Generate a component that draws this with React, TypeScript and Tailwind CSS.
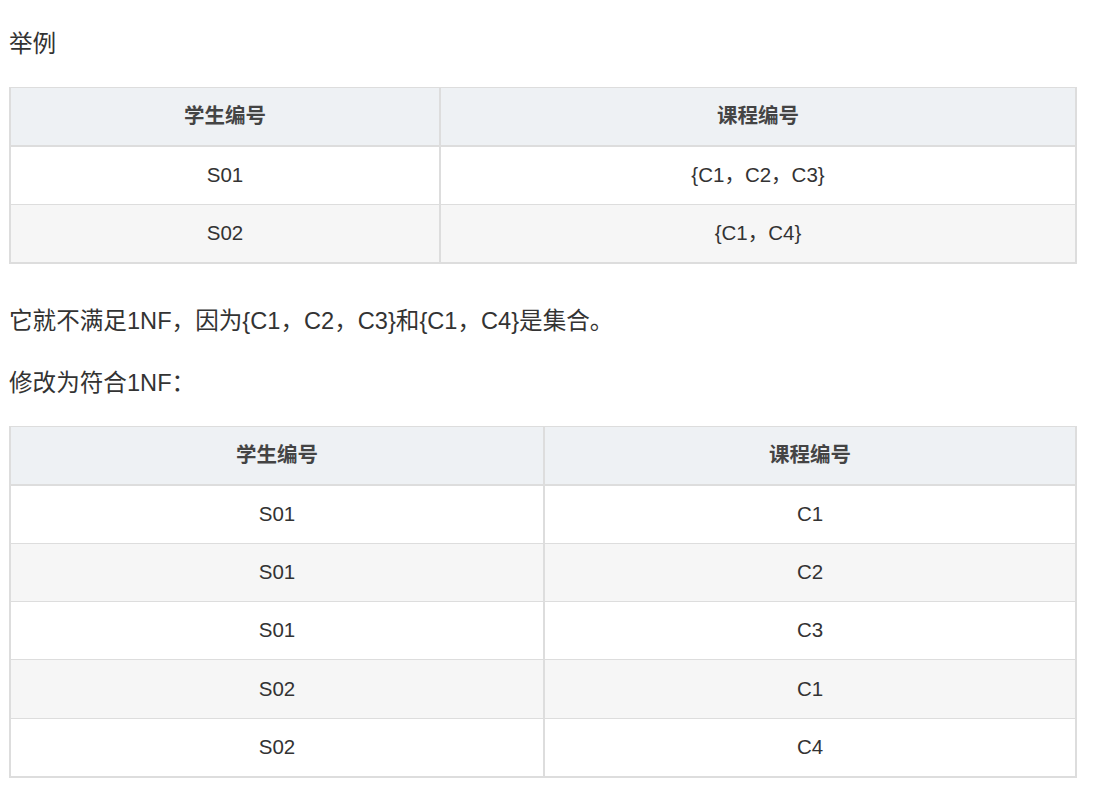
import React from 'react';

type Row = [string, string];

const font = { fontFamily: '"Liberation Sans", Arial, "Noto Sans CJK SC", sans-serif' };

// 简单的两列表格，列宽按截图给定
const DataTable: React.FC<{ rows: Row[]; firstCol: string }> = ({ rows, firstCol }) => (
  <table className="w-full border-collapse border-l-2 border-r-2 border-t border-b-2 border-[#dddddd] text-[20.5px] text-[#333333] mb-[40px]">
    <colgroup>
      <col className={firstCol} />
      <col />
    </colgroup>
    <thead>
      <tr className="bg-[#eef1f4]">
        <th className="h-[58.5px] border-r-2 border-b-2 border-[#dddddd] font-bold text-[#444444] text-center">学生编号</th>
        <th className="h-[58.5px] border-b-2 border-[#dddddd] font-bold text-[#444444] text-center">课程编号</th>
      </tr>
    </thead>
    <tbody>
      {rows.map(([a, b], i) => (
        <tr key={i} className={i % 2 === 1 ? 'bg-[#f6f6f6]' : 'bg-white'}>
          <td className="h-[58.4px] border-r-2 border-t border-[#dddddd] text-center">{a}</td>
          <td className="h-[58.4px] border-t border-[#dddddd] text-center">{b}</td>
        </tr>
      ))}
    </tbody>
  </table>
);

const App: React.FC = () => {
  return (
    <div className="min-h-screen bg-white pt-[27px] pl-[9px] pr-[19px] text-[#333333]" style={font}>
      <p className="text-[23.6px] leading-[35px] mb-[25px]">举例</p>

      <DataTable
        firstCol="w-[430px]"
        rows={[
          ['S01', '{C1，C2，C3}'],
          ['S02', '{C1，C4}'],
        ]}
      />

      <p className="text-[23.6px] leading-[35px] mb-[27px]">它就不满足1NF，因为{'{'}C1，C2，C3{'}'}和{'{'}C1，C4{'}'}是集合。</p>
      <p className="text-[23.6px] leading-[35px] mb-[25px]">修改为符合1NF：</p>

      <DataTable
        firstCol="w-[534px]"
        rows={[
          ['S01', 'C1'],
          ['S01', 'C2'],
          ['S01', 'C3'],
          ['S02', 'C1'],
          ['S02', 'C4'],
        ]}
      />
    </div>
  );
};

export default App;
